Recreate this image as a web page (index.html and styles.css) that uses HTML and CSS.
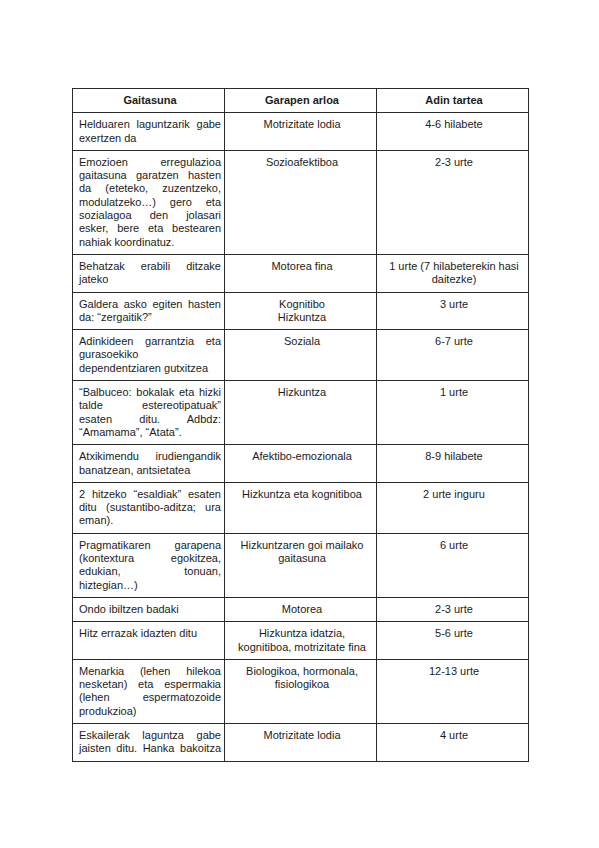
FILE: index.html
```html
<!DOCTYPE html>
<html lang="eu">
<head>
<meta charset="utf-8">
<title>Gaitasunak</title>
<link rel="stylesheet" href="styles.css">
</head>
<body>
<div class="page">
<table class="dev">
  <colgroup><col class="c"><col class="c"><col class="c"></colgroup>
  <thead>
    <tr><th>Gaitasuna</th><th>Garapen arloa</th><th>Adin tartea</th></tr>
  </thead>
  <tbody>
    <tr><td class="j">Helduaren laguntzarik gabe exertzen da</td><td>Motrizitate lodia</td><td>4-6 hilabete</td></tr>
    <tr><td class="j">Emozioen erregulazioa gaitasuna garatzen hasten da (eteteko, zuzentzeko, modulatzeko…) gero eta sozialagoa den jolasari esker, bere eta bestearen nahiak koordinatuz.</td><td>Sozioafektiboa</td><td>2-3 urte</td></tr>
    <tr><td class="j">Behatzak erabili ditzake jateko</td><td>Motorea fina</td><td>1 urte (7 hilabeterekin hasi daitezke)</td></tr>
    <tr><td class="j">Galdera asko egiten hasten da: “zergaitik?”</td><td>Kognitibo<br>Hizkuntza</td><td>3 urte</td></tr>
    <tr><td class="j">Adinkideen garrantzia eta gurasoekiko dependentziaren gutxitzea</td><td>Soziala</td><td>6-7 urte</td></tr>
    <tr><td class="j">“Balbuceo: bokalak eta hizki talde estereotipatuak” esaten&nbsp;ditu. Adbdz: “Amamama”,&nbsp;“Atata”.</td><td>Hizkuntza</td><td>1 urte</td></tr>
    <tr><td class="j">Atxikimendu irudiengandik banatzean, antsietatea</td><td>Afektibo-emozionala</td><td>8-9 hilabete</td></tr>
    <tr><td class="j">2 hitzeko “esaldiak” esaten ditu (sustantibo-aditza; ura eman).</td><td>Hizkuntza eta kognitiboa</td><td>2 urte inguru</td></tr>
    <tr><td class="j">Pragmatikaren garapena (kontextura egokitzea, edukian, tonuan, hiztegian…)</td><td>Hizkuntzaren goi mailako gaitasuna</td><td>6 urte</td></tr>
    <tr><td class="j">Ondo ibiltzen badaki</td><td>Motorea</td><td>2-3 urte</td></tr>
    <tr><td class="j">Hitz errazak idazten ditu</td><td>Hizkuntza idatzia, kognitiboa, motrizitate fina</td><td>5-6 urte</td></tr>
    <tr><td class="j">Menarkia (lehen hilekoa nesketan) eta espermakia (lehen espermatozoide produkzioa)</td><td>Biologikoa, hormonala, fisiologikoa</td><td>12-13 urte</td></tr>
    <tr><td class="j jl">Eskailerak laguntza gabe jaisten ditu. Hanka bakoitza</td><td>Motrizitate lodia</td><td>4 urte</td></tr>
  </tbody>
</table>
</div>
</body>
</html>
```
FILE: styles.css
```css
html, body {
  margin: 0;
  padding: 0;
  background: #ffffff;
}
.page {
  padding: 88px 0 0 72px;
}
.dev {
  border-collapse: collapse;
  table-layout: fixed;
  width: 457px;
  font-family: "Liberation Sans", Arial, sans-serif;
  font-size: 11px;
  line-height: 13.3px;
  color: #1c1c1c;
}
.dev th,
.dev td {
  border: 1px solid #2a2a2a;
  padding: 5px 3px 5px 6px;
  vertical-align: top;
  text-align: center;
}
.dev th {
  font-weight: bold;
}
.dev td.j {
  text-align: justify;
}
.dev td.jl {
  text-align-last: justify;
}
```
